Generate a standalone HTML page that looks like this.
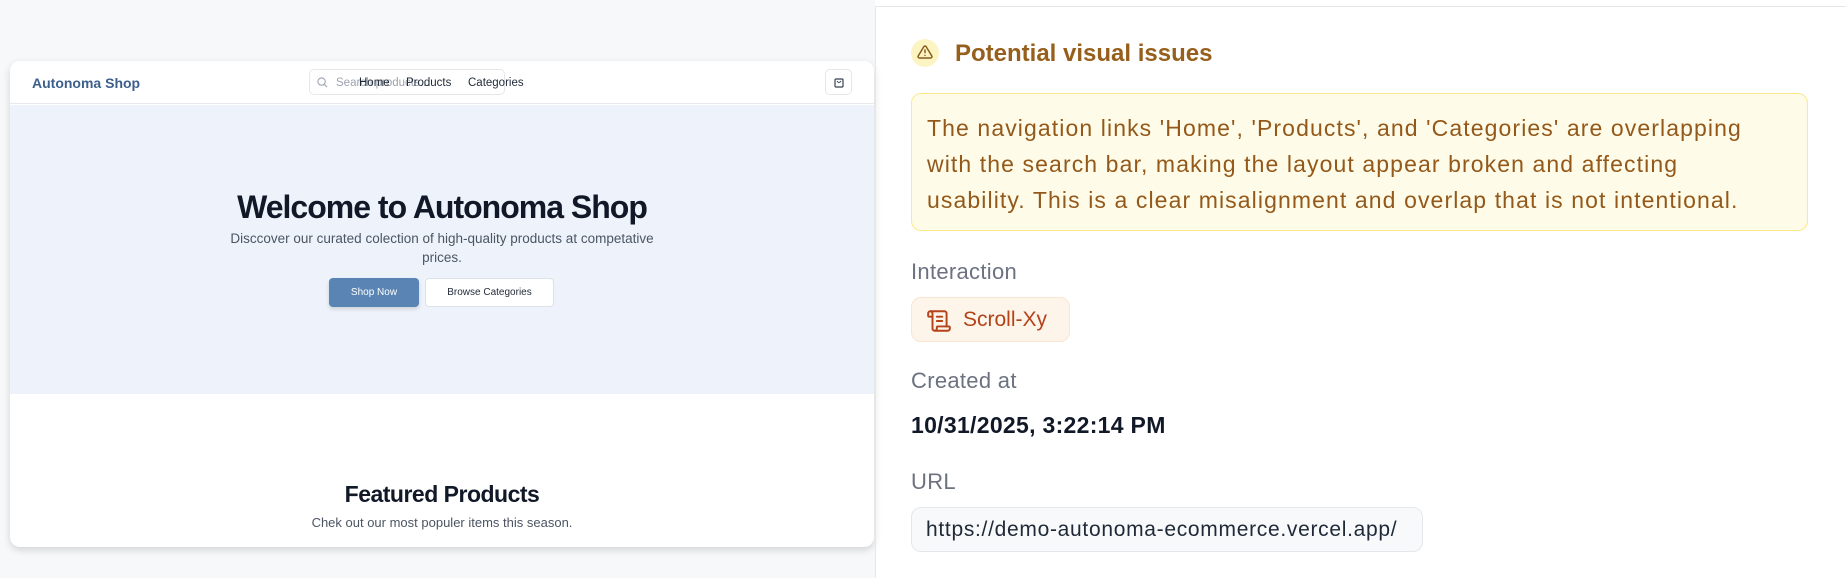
<!DOCTYPE html>
<html><head><meta charset="utf-8"><style>
*{box-sizing:border-box;margin:0;padding:0}
body{width:1846px;height:578px;overflow:hidden;background:#fff;font-family:"Liberation Sans",sans-serif;position:relative}
.left{position:absolute;left:0;top:0;width:875px;height:578px;background:#f7f8fa}
.card{position:absolute;left:10px;top:61px;width:864px;height:486px;background:#fff;border-radius:10px;box-shadow:0 3px 8px rgba(0,0,0,.15);overflow:hidden}
.nav{position:absolute;left:0;top:0;width:100%;height:43px;border-bottom:1px solid #e6e9ee;background:#fff}
.logo{position:absolute;left:22px;top:14px;font-size:14px;font-weight:bold;color:#3d5f8c}
.search{position:absolute;left:299px;top:8px;width:196px;height:26px;border:1px solid #e5e7eb;border-radius:5px}
.t{position:absolute;font-size:11.5px;color:#1f2937;top:16px}
.cart{position:absolute;left:815px;top:8px;width:27px;height:26px;border:1px solid #e5e7eb;border-radius:5px}
.hero{position:absolute;left:0;top:44px;width:100%;height:289px;background:#eef3fb}
h1{position:absolute;left:0;width:100%;text-align:center;font-size:32px;letter-spacing:-1px;color:#111827}
.sub{position:absolute;left:207px;width:450px;text-align:center;font-size:13.5px;line-height:19px;color:#4b5563}
.b1{position:absolute;left:319px;width:90px;height:29px;background:#5a84b3;border-radius:4px;color:#fff;font-size:10px;text-align:center;line-height:29px;box-shadow:0 2px 4px rgba(0,0,0,.15)}
.b2{position:absolute;left:415px;width:129px;height:29px;background:#fff;border:1px solid #dde2ea;border-radius:4px;color:#1f2937;font-size:10px;text-align:center;line-height:27px}
h2{position:absolute;left:0;width:100%;text-align:center;font-size:23px;letter-spacing:-.5px;color:#111827}
.fs{position:absolute;left:0;width:100%;text-align:center;font-size:13px;color:#4b5563}
.right{position:absolute;left:875px;top:6px;width:971px;height:572px;border-left:1px solid #e5e7eb;border-top:1px solid #e5e7eb}
.ic{position:absolute;left:911px;top:39px;width:28px;height:28px;border-radius:50%;background:#fdf4c4}
.title{position:absolute;left:955px;top:40px;font-size:24px;font-weight:bold;color:#96601c}
.box{position:absolute;left:911px;top:93px;width:897px;height:138px;overflow:hidden;background:#fefce8;border:1px solid #fbe98a;border-radius:10px;padding:16px 60px 16px 15px;font-size:23px;letter-spacing:1.1px;line-height:36px;color:#93581a}
.lab{position:absolute;left:911px;font-size:22px;letter-spacing:.3px;color:#6b7280}
.badge{position:absolute;left:911px;top:297px;width:159px;height:45px;background:#fdf4ea;border:1px solid #fbe5cf;border-radius:10px}
.badge span{position:absolute;left:51px;top:10px;font-size:21px;color:#b4431a}
.date{position:absolute;left:911px;top:412px;font-size:23px;letter-spacing:.3px;font-weight:bold;color:#111827}
.url{position:absolute;left:911px;top:507px;width:512px;height:45px;background:#f8f9fb;border:1px solid #e5e7eb;border-radius:10px;font-size:21px;letter-spacing:.7px;color:#1f2937;padding:10px 14px;white-space:nowrap}
</style></head><body>
<div class="left"><div class="card">
<div class="nav"><div class="logo">Autonoma Shop</div>
<div class="search"><svg style="position:absolute;left:7px;top:7px" width="11" height="11" viewBox="0 0 12 12"><circle cx="5" cy="5" r="4" fill="none" stroke="#9ca3af" stroke-width="1.2"/><path d="M8 8l3 3" stroke="#9ca3af" stroke-width="1.2"/></svg></div>
<div class="t" style="left:326px;color:#9ca3af">Search products...</div>
<div class="t" style="left:349px">Home</div>
<div class="t" style="left:396px">Products</div>
<div class="t" style="left:458px">Categories</div>
<div class="cart"><svg style="position:absolute;left:8px;top:7px" width="10" height="11" viewBox="0 0 10 11"><rect x="1" y="2" width="8" height="8" rx="1" fill="none" stroke="#374151" stroke-width="1.2"/><path d="M3 4q2 3 4 0" fill="none" stroke="#374151" stroke-width="1"/></svg></div>
</div>
<div class="hero">
<h1 style="top:84px">Welcome to Autonoma Shop</h1>
<div class="sub" style="top:124px">Disccover our curated colection of high-quality products at competative prices.</div>
<div class="b1" style="top:173px">Shop Now</div>
<div class="b2" style="top:173px">Browse Categories</div>
</div>
<h2 style="top:420px">Featured Products</h2>
<div class="fs" style="top:454px">Chek out our most populer items this season.</div>
</div></div>
<div class="right"></div>
<div class="ic"><svg style="position:absolute;left:6px;top:5px" width="16" height="16" viewBox="0 0 24 24" fill="none" stroke="#8a5a17" stroke-width="2.2" stroke-linecap="round" stroke-linejoin="round"><path d="M10.3 3.9L1.8 18a2 2 0 0 0 1.7 3h17a2 2 0 0 0 1.7-3L13.7 3.9a2 2 0 0 0-3.4 0z"/><path d="M12 9v4M12 17h.01"/></svg></div>
<div class="title">Potential visual issues</div>
<div class="box">The navigation links 'Home', 'Products', and 'Categories' are overlapping with the search bar, making the layout appear broken and affecting usability. This is a clear misalignment and overlap that is not intentional.</div>
<div class="lab" style="top:259px">Interaction</div>
<div class="badge"><svg style="position:absolute;left:14px;top:10px" width="26" height="26" viewBox="0 0 24 24" fill="none" stroke="#b4431a" stroke-width="1.8" stroke-linecap="round" stroke-linejoin="round"><path d="M15 12h-5M15 8h-5M19 17V5a2 2 0 0 0-2-2H4"/><path d="M8 21h12a2 2 0 0 0 2-2v-1a1 1 0 0 0-1-1H11a1 1 0 0 0-1 1v1a2 2 0 1 1-4 0V5a2 2 0 1 0-4 0v2a1 1 0 0 0 1 1h3"/></svg><span>Scroll-Xy</span></div>
<div class="lab" style="top:368px">Created at</div>
<div class="date">10/31/2025, 3:22:14 PM</div>
<div class="lab" style="top:469px">URL</div>
<div class="url">https://demo-autonoma-ecommerce.vercel.app/</div>
</body></html>
